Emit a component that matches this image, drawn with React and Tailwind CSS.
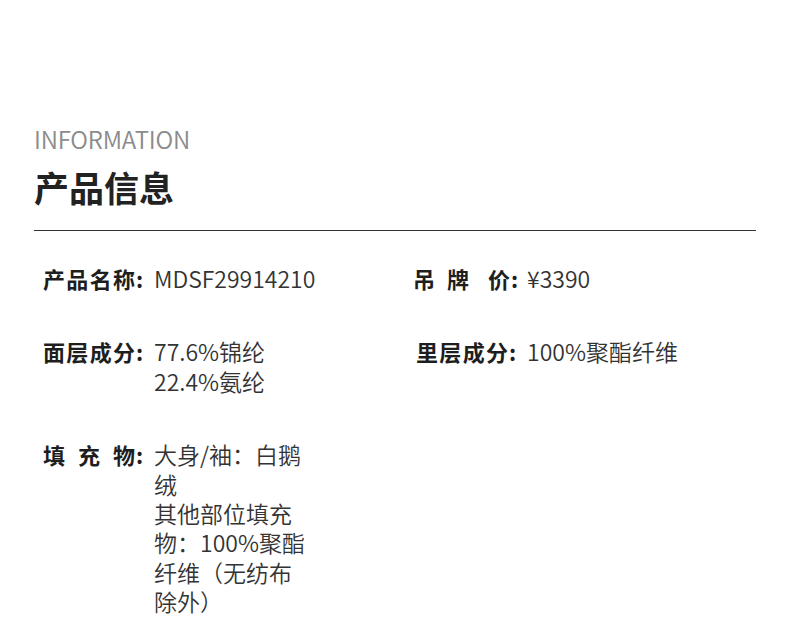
const FONT = "font-['Noto_Sans_CJK_SC','Noto_Sans',sans-serif]"

// label chars are spread out to the same span, with a colon after
function Label({ chars, gaps, w = 'w-[111px]' }) {
  return (
    <div className={`flex ${w} shrink-0 items-start font-bold text-[#1e1e1e]`}>
      <div className={`flex ${gaps ? '' : 'w-[92px] justify-between'}`}>
        {chars.map((c, i) => (
          <span key={i} className={gaps ? gaps[i] : ''}>{c}</span>
        ))}
      </div>
      <span className="ml-[1px]">:</span>
    </div>
  )
}

function Item({ label, gaps, lines, labelW, valueW = 'w-[155px]' }) {
  return (
    <div className="flex">
      <Label chars={label} gaps={gaps} w={labelW} />
      <div className={`${valueW} text-[23px] font-[350] text-[#333]`}>
        {lines.map((l, i) => <div key={i}>{l}</div>)}
      </div>
    </div>
  )
}

export default function App() {
  return (
    <div className={`w-[790px] h-[620px] overflow-hidden bg-white px-[34px] ${FONT}`}>
      <div className="pt-[127px] text-[24px] leading-[24px] font-[350] text-[#8b8b8b] tracking-[-0.2px]">INFORMATION</div>
      <h1 className="mt-[16px] text-[35px] leading-[40px] font-bold text-[#222]">产品信息</h1>
      <div className="mt-[23px] h-px w-[722px] bg-[#333]" />

      <div className="mt-[33px] grid grid-cols-[370px_1fr] gap-y-[44px] pl-[9px] text-[22px] leading-[29.4px]">
        <Item label={['产', '品', '名', '称']} lines={['MDSF29914210']} valueW="w-[220px]" />
        <Item label={['吊', '牌', '价']} gaps={['mr-[12px]', 'mr-[19px]', '']} labelW="w-[114px]" lines={['¥3390']} valueW="w-[220px]" />

        <Item label={['面', '层', '成', '分']} lines={['77.6%锦纶', '22.4%氨纶']} />
        <div className="pl-[3px]">
          <Item label={['里', '层', '成', '分']} lines={['100%聚酯纤维']} valueW="w-[220px]" />
        </div>

        <Item
          label={['填', '充', '物']}
          lines={['大身/袖：白鹅绒', '其他部位填充物：100%聚酯纤维（无纺布除外）']}
        />
      </div>
    </div>
  )
}
